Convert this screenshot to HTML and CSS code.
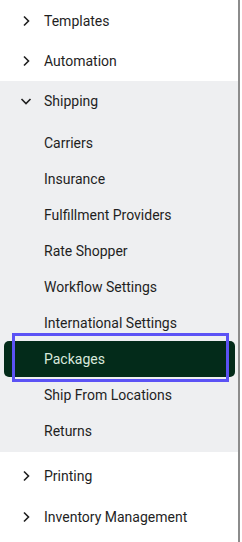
FILE: index.html
```html
<!DOCTYPE html>
<html>
<head>
	<meta charset="UTF-8">
	<title>Settings nav</title>
	<link rel="stylesheet" href="styles.css">
</head>
<body>
	<div class="nav">
		<div class="group">
			<div class="head">
				<svg class="chev" width="12" height="12" viewBox="0 0 12 12"><path d="M4 1.5 L8.5 6 L4 10.5"/></svg>
				<span>Templates</span>
			</div>
		</div>
		<div class="group">
			<div class="head">
				<svg class="chev" width="12" height="12" viewBox="0 0 12 12"><path d="M4 1.5 L8.5 6 L4 10.5"/></svg>
				<span>Automation</span>
			</div>
		</div>
		<div class="group open">
			<div class="head">
				<svg class="chev" width="12" height="12" viewBox="0 0 12 12"><path d="M1.5 4 L6 8.5 L10.5 4"/></svg>
				<span>Shipping</span>
			</div>
			<div class="items">
				<div class="item">Carriers</div>
				<div class="item">Insurance</div>
				<div class="item">Fulfillment Providers</div>
				<div class="item">Rate Shopper</div>
				<div class="item">Workflow Settings</div>
				<div class="item">International Settings</div>
				<div class="item active">Packages<span class="focus"></span></div>
				<div class="item">Ship From Locations</div>
				<div class="item">Returns</div>
			</div>
		</div>
		<div class="group after">
			<div class="head">
				<svg class="chev" width="12" height="12" viewBox="0 0 12 12"><path d="M4 1.5 L8.5 6 L4 10.5"/></svg>
				<span>Printing</span>
			</div>
		</div>
		<div class="group">
			<div class="head">
				<svg class="chev" width="12" height="12" viewBox="0 0 12 12"><path d="M4 1.5 L8.5 6 L4 10.5"/></svg>
				<span>Inventory Management</span>
			</div>
		</div>
	</div>
</body>
</html>
```

FILE: styles.css
```css
*{
	margin: 0;
	padding: 0;
	box-sizing: border-box;
}
body{
	background: #fff;
	font-family: Roboto, "Liberation Sans", sans-serif;
	font-size: 14px;
	color: #1f1f1f;
}
.nav{
	width: 240px;
	height: 542px;
	border-right: 2px solid #8c8c8c;
	padding-top: 1px;
}
.group.open{
	background: #eeeff1;
	padding-bottom: 3px;
}
.group.after{
	margin-top: 4px;
}
.head{
	display: flex;
	align-items: center;
	height: 40px;
	padding-left: 20px;
}
.group.after + .group .head{
	height: 41px;
}
.chev{
	fill: none;
	stroke: #1f1f1f;
	stroke-width: 1.6;
	margin-right: 12px;
}
.items{
	padding-top: 4px;
}
.item{
	height: 36px;
	line-height: 36px;
	padding-left: 44px;
	position: relative;
}
.item.active{
	background: #032b1a;
	color: #d8e8dc;
	border-radius: 5px;
	margin: 0 3px 0 4px;
	padding-left: 40px;
}
/* focus ring */
.focus{
	position: absolute;
	left: 8px;
	right: 6px;
	top: -8px;
	bottom: -5px;
	border: 3px solid #5b52f5;
}
```
